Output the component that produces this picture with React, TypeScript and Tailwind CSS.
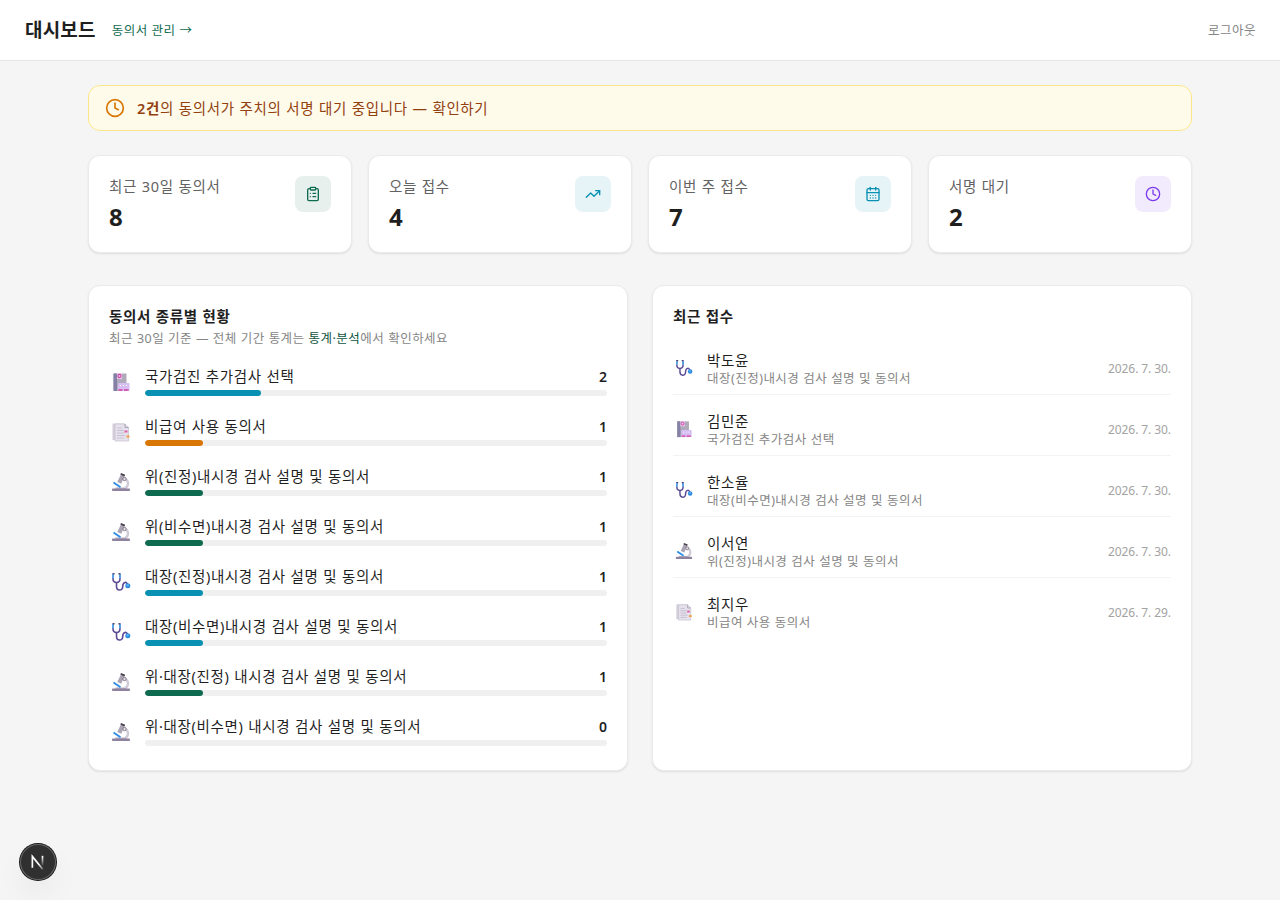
import { CalendarDays, ClipboardList, Clock, TrendingUp } from 'lucide-react';

type IconKind = 'checkup' | 'document' | 'microscope' | 'stethoscope';

const stats = [
  { label: '최근 30일 동의서', value: 8, icon: ClipboardList, color: 'bg-[#e7f0ed] text-[#0f6b4f]' },
  { label: '오늘 접수', value: 4, icon: TrendingUp, color: 'bg-[#e6f4f8] text-[#0891b2]' },
  { label: '이번 주 접수', value: 7, icon: CalendarDays, color: 'bg-[#e6f4f8] text-[#0891b2]' },
  { label: '서명 대기', value: 2, icon: Clock, color: 'bg-[#f2ebfd] text-[#7c3aed]' },
];

const types: { name: string; count: number; icon: IconKind; bar: string }[] = [
  { name: '국가검진 추가검사 선택', count: 2, icon: 'checkup', bar: 'bg-[#0891b2]' },
  { name: '비급여 사용 동의서', count: 1, icon: 'document', bar: 'bg-[#d97706]' },
  { name: '위(진정)내시경 검사 설명 및 동의서', count: 1, icon: 'microscope', bar: 'bg-[#0f6b4f]' },
  { name: '위(비수면)내시경 검사 설명 및 동의서', count: 1, icon: 'microscope', bar: 'bg-[#0f6b4f]' },
  { name: '대장(진정)내시경 검사 설명 및 동의서', count: 1, icon: 'stethoscope', bar: 'bg-[#0891b2]' },
  { name: '대장(비수면)내시경 검사 설명 및 동의서', count: 1, icon: 'stethoscope', bar: 'bg-[#0891b2]' },
  { name: '위·대장(진정) 내시경 검사 설명 및 동의서', count: 1, icon: 'microscope', bar: 'bg-[#0f6b4f]' },
  { name: '위·대장(비수면) 내시경 검사 설명 및 동의서', count: 0, icon: 'microscope', bar: 'bg-[#0f6b4f]' },
];

const recent: { name: string; form: string; date: string; icon: IconKind }[] = [
  { name: '박도윤', form: '대장(진정)내시경 검사 설명 및 동의서', date: '2026. 7. 30.', icon: 'stethoscope' },
  { name: '김민준', form: '국가검진 추가검사 선택', date: '2026. 7. 30.', icon: 'checkup' },
  { name: '한소율', form: '대장(비수면)내시경 검사 설명 및 동의서', date: '2026. 7. 30.', icon: 'stethoscope' },
  { name: '이서연', form: '위(진정)내시경 검사 설명 및 동의서', date: '2026. 7. 30.', icon: 'microscope' },
  { name: '최지우', form: '비급여 사용 동의서', date: '2026. 7. 29.', icon: 'document' },
];

const body = 'text-[14.5px] leading-5 tracking-[0.64px] [word-spacing:0.4px]';
const small = 'text-[12.5px] leading-[18px] tracking-[0.48px] [word-spacing:0.2px]';

function FormIcon({ kind, className }: { kind: IconKind; className: string }) {
  return (
    <svg viewBox="0 0 20 20" className={className} fill="none">
      {kind === 'checkup' && (
        <>
          <path d="M2.5 1.5h13V19h-13z" fill="#b0abba" />
          <path d="M2.5 1.5h3.5V19H2.5z" fill="#8580a6" />
          <path d="M6 1.5h5V7H6z" fill="#e9c9ee" />
          <circle cx="8.5" cy="4" r="1.6" stroke="#d63fa0" strokeWidth="1.1" />
          <rect x="7" y="11" width="11.5" height="8" rx="1" fill="#d6bdf2" />
          <path d="M9 13.5h1m2 0h1m2 0h1" stroke="#fff" />
          <path d="M7.5 18h4m1.5 0h4.5" stroke="#d63fa0" strokeWidth="1.3" />
        </>
      )}
      {kind === 'document' && (
        <>
          <path d="M1.5 1.5h12V18h-12z" fill="#d3cfda" />
          <path d="M4 2h10l3.5 3.5V19H4z" fill="#e6e2ec" stroke="#c4bdcf" strokeWidth=".7" />
          <path d="M14 2v3.5h3.5" stroke="#a89fb8" />
          <path d="M6 6h5M6 8.5h7M6 11h7M6 13.5h8M6 16h7" stroke="#c7bfd5" strokeWidth="1.1" />
          <path d="M13.5 8.5h3v2h-3z" fill="#e05da8" />
          <path d="M15.5 13.5h3v2h-3z" fill="#f39a42" />
        </>
      )}
      {kind === 'microscope' && (
        <>
          <path d="M4.5 16.5h11" stroke="#b5adc0" strokeWidth="2" />
          <path d="M13.5 6.5c4.5 2 4.5 7 1 9.5" stroke="#d0c9d6" strokeWidth="2.4" />
          <path d="m10.2 1.8 3.5 1.5-3.4 8.5-4-1.9z" fill="#aaa4b5" />
          <path d="m10 1 4.2 1.8-.8 1.6-4.1-1.9z" fill="#49414f" />
          <circle cx="13.5" cy="7" r="1.7" fill="#e4dfe8" stroke="#6b6375" strokeWidth=".8" />
          <path d="m2.5 10.5 7 4.8" stroke="#2f8de4" strokeWidth="2" />
          <rect x="1" y="16.5" width="18" height="2.5" rx=".8" fill="#8f829f" />
        </>
      )}
      {kind === 'stethoscope' && (
        <>
          <path d="M3 2H2v4.5C2 9 3.5 10.5 5.5 10.5S9 9 9 6.5V2H8" stroke="#5c4b96" strokeWidth="1.6" />
          <path d="M2 2.3v4M9 2.3v4" stroke="#54a9ec" strokeWidth="1.8" />
          <path d="M2.5 1.8h1M7.5 1.8h1" stroke="#35304a" strokeWidth="1.5" />
          <path d="M5.5 10.5v3.7c0 5 6.2 5 6.2.5 0-5 4.3-5.8 4.8-1.7" stroke="#5c4b96" strokeWidth="1.6" />
          <circle cx="16.8" cy="13.8" r="2.5" fill="#2988de" />
          <circle cx="16.6" cy="13.3" r="1.2" fill="#59b0f3" />
        </>
      )}
    </svg>
  );
}

export default function App() {
  return (
    <div className="min-h-screen bg-[#f5f5f5] text-[#1f1f1f] font-['Noto_Sans','Noto_Sans_CJK_KR',sans-serif]">
      <header className="flex h-[61px] items-center justify-between border-b border-[#e5e5e5] bg-white px-6">
        <div className="flex items-center gap-4">
          <h1 className="pl-px text-[19px] font-bold tracking-[0.2px]">대시보드</h1>
          <a className={`${small} pt-0.5 text-[#0f6b4f]`}>동의서 관리 →</a>
        </div>
        <button className={`${small} pt-px text-[#858585]`}>로그아웃</button>
      </header>

      <main className="mx-auto w-[1104px] pt-6">
        <a className="flex h-[46px] items-center gap-3 rounded-xl border border-[#fde68a] bg-[#fffbeb] px-4 text-[#92400e]">
          <Clock size={20} className="text-[#d97706]" />
          <span className={body}>
            <b className="font-semibold">2건</b>의 동의서가 주치의 서명 대기 중입니다 — 확인하기
          </span>
        </a>

        <section className="mt-6 grid grid-cols-4 gap-4">
          {stats.map(({ label, value, icon: Icon, color }) => (
            <div
              key={label}
              className="flex h-[98px] items-start justify-between rounded-xl border border-[#ebebeb] bg-white p-5 shadow-[0_1px_2px_rgba(0,0,0,0.1)]"
            >
              <div>
                <p className={`${body} text-[#626262]`}>{label}</p>
                <p className="mt-[5px] text-[24px] leading-8 font-bold">{value}</p>
              </div>
              <div className={`flex size-9 items-center justify-center rounded-lg ${color}`}>
                <Icon size={16} />
              </div>
            </div>
          ))}
        </section>

        <section className="mt-8 grid grid-cols-2 gap-6">
          <div className="h-[486px] rounded-xl border border-[#ebebeb] bg-white p-5 shadow-[0_1px_2px_rgba(0,0,0,0.1)]">
            <h2 className={`${body} font-semibold`}>동의서 종류별 현황</h2>
            <p className={`${small} mt-1 text-[#858585]`}>
              최근 30일 기준 — 전체 기간 통계는 <a className="text-[#0f5540]">통계·분석</a>에서 확인하세요
            </p>
            <ul className="mt-[18px] flex flex-col gap-5">
              {types.map((t) => (
                <li key={t.name} className="flex h-[30px] items-center gap-3">
                  <span className="flex w-6 justify-center pt-0.5">
                    <FormIcon kind={t.icon} className="size-5" />
                  </span>
                  <div className="flex-1">
                    <div className="flex h-[22px] justify-between">
                      <span className={body}>{t.name}</span>
                      <span className="text-[14px] leading-[22px] font-semibold">{t.count}</span>
                    </div>
                    <div className="mt-0.5 h-1.5 overflow-hidden rounded-full bg-[#f0f0f0]">
                      <div className={`h-full rounded-full ${t.bar}`} style={{ width: `${t.count * 12.5}%` }} />
                    </div>
                  </div>
                </li>
              ))}
            </ul>
          </div>

          <div className="h-[486px] rounded-xl border border-[#ebebeb] bg-white p-5 shadow-[0_1px_2px_rgba(0,0,0,0.1)]">
            <h2 className={`${body} font-semibold`}>최근 접수</h2>
            <ul className="mt-2">
              {recent.map((r) => (
                <li
                  key={r.name}
                  className="flex h-[61px] items-center gap-3 border-b border-[#f3f3f3] pt-[9px] last:border-transparent"
                >
                  <span className="flex w-[22px] justify-center pb-px">
                    <FormIcon kind={r.icon} className="size-[18px]" />
                  </span>
                  <div className="flex-1 pt-px">
                    <p className="text-[14.5px] leading-[18px] tracking-[0.64px]">{r.name}</p>
                    <p className={`${small} pt-px text-[#858585]`}>{r.form}</p>
                  </div>
                  <span className="pt-px text-[12px] tracking-[-0.08px] text-[#a3a3a3]">{r.date}</span>
                </li>
              ))}
            </ul>
          </div>
        </section>
      </main>

      <button className="fixed bottom-5 left-5 flex size-9 items-center justify-center rounded-full bg-[#303030] shadow-[0_0_0_1px_#171717,inset_0_0_0_1px_#666,0_16px_32px_-8px_rgba(0,0,0,0.15)]">
        <svg viewBox="0 0 16 16" className="size-[18px]" fill="none">
          <defs>
            <linearGradient id="leg" x1="10" y1="9" x2="13" y2="14" gradientUnits="userSpaceOnUse">
              <stop stopColor="#fff" />
              <stop offset="1" stopColor="#fff" stopOpacity="0.3" />
            </linearGradient>
            <linearGradient id="stem" x1="12" y1="3" x2="12" y2="12" gradientUnits="userSpaceOnUse">
              <stop stopColor="#fff" />
              <stop offset="1" stopColor="#fff" stopOpacity="0" />
            </linearGradient>
          </defs>
          <path d="M3 13V3l9.2 11.5" stroke="url(#leg)" strokeWidth="1.5" />
          <path d="M12 2.5v8.5" stroke="url(#stem)" strokeWidth="1.5" />
        </svg>
      </button>
    </div>
  );
}
